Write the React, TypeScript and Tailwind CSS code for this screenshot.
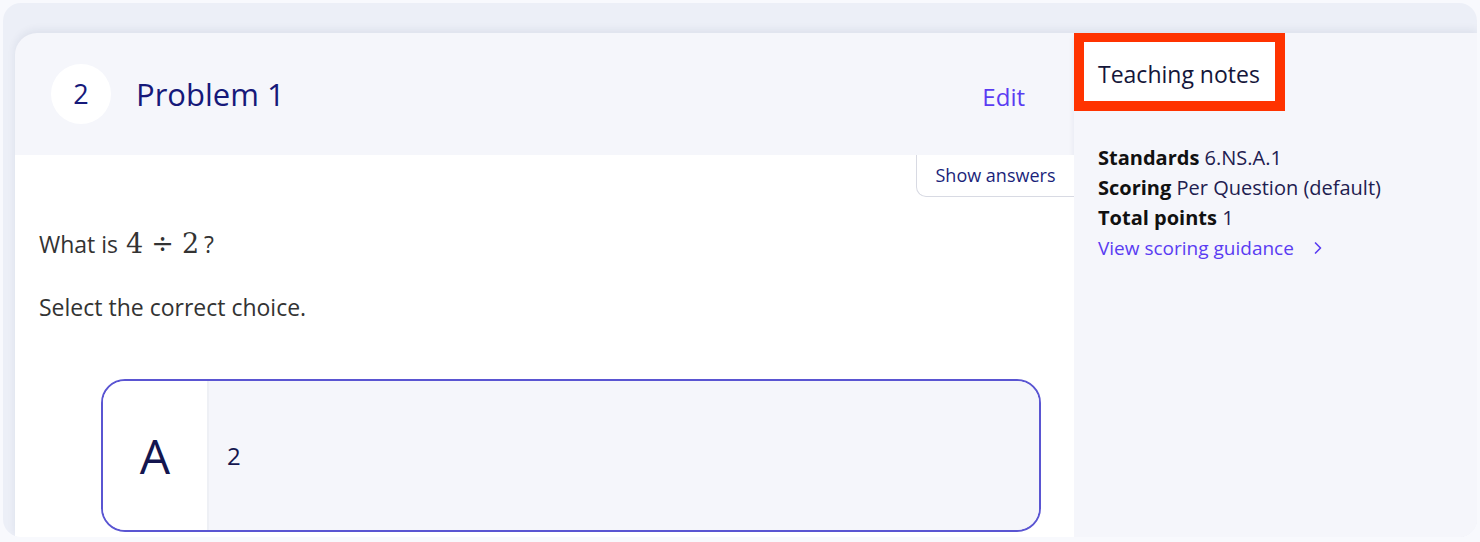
import { ChevronRight } from 'lucide-react';

const font = { fontFamily: '"Open Sans", "Noto Sans", sans-serif' };

const Notes = () => (
  <aside className="flex-1 bg-[#f5f6fb] shadow-[-4px_0_6px_-4px_rgba(30,40,90,0.08)] flex flex-col">
    <div className="w-[211px] h-[79px] mt-[-1px] border-[10px] border-[#ff3300] bg-white flex items-center pl-[14px] pt-[6px]">
      <h2 className="text-[23px] text-[#14163a] leading-none">Teaching notes</h2>
    </div>
    <div className="pl-[24px] pt-[32px] text-[20px] leading-[30px] text-[#1e2050]">
      <div><span className="font-bold text-[#111]">Standards</span> 6.NS.A.1</div>
      <div><span className="font-bold text-[#111]">Scoring</span> Per Question (default)</div>
      <div><span className="font-bold text-[#111]">Total points</span> 1</div>
      <div className="flex items-center gap-[14px] text-[19px] text-[#5a3cf2]">
        View scoring guidance
        <ChevronRight className="w-[20px] h-[20px]" strokeWidth={2} />
      </div>
    </div>
  </aside>
);

export default function App() {
  return (
    <div className="w-[1480px] h-[542px] bg-[#f8f9fd] px-[3px] pt-[3px] pb-[5px]" style={font}>
      <div className="h-full rounded-[18px] bg-[#eceff7] pt-[30px] pl-[12px] flex overflow-hidden">
        <div className="flex-1 flex rounded-tl-[22px] bg-[#f5f6fb] overflow-hidden shadow-[0_-3px_8px_rgba(30,40,90,0.07)]">
          <main className="w-[1059px] flex flex-col">
            <header className="h-[122px] flex items-center pl-[36px] pr-[49px]">
              <div className="w-[60px] h-[60px] rounded-full bg-white flex items-center justify-center text-[27px] text-[#16197a]">
                2
              </div>
              <h1 className="ml-[25px] text-[31px] text-[#16197a] leading-none">Problem 1</h1>
              <button className="ml-auto text-[24px] text-[#5a3cf2] mt-[6px]">Edit</button>
            </header>
            <section className="flex-1 bg-white relative pl-[24px]">
              <button className="absolute top-0 right-0 w-[158px] h-[42px] bg-white border-l border-b border-[#d8dae3] rounded-bl-[10px] text-[18px] text-[#1b1f7a]">
                Show answers
              </button>
              <p className="pt-[75px] text-[23px] text-[#333] leading-none flex items-baseline">
                What is
                <span className="ml-[8px] mr-[5px] text-[27px] flex gap-[8px]" style={{ fontFamily: '"DejaVu Serif", "Liberation Serif", serif' }}>
                  <span>4</span>
                  <span>÷</span>
                  <span>2</span>
                </span>
                ?
              </p>
              <p className="mt-[39px] text-[23px] text-[#333] leading-none">Select the correct choice.</p>
              <div className="mt-[60px] ml-[62px] w-[940px] h-[153px] rounded-[24px] border-2 border-[#5a55d2] flex overflow-hidden">
                <div className="w-[106px] bg-white border-r-2 border-[#eef0f5] flex items-center justify-center text-[48px] text-[#14164f]">
                  A
                </div>
                <div className="flex-1 bg-[#f5f6fb] flex items-center pl-[18px] text-[24px] text-[#14164f]">2</div>
              </div>
            </section>
          </main>
          <Notes />
        </div>
      </div>
    </div>
  );
}
